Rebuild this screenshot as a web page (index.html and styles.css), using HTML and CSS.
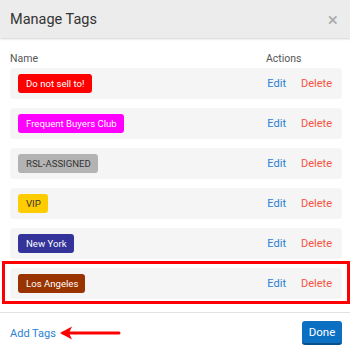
FILE: index.html
```html
<!DOCTYPE html>
<html>
<head>
<meta charset="utf-8">
<link rel="stylesheet" href="styles.css">
</head>
<body>
<div class="modal">
  <div class="header">
    <h1 class="title">Manage Tags</h1>
    <span class="close">&times;</span>
  </div>
  <div class="content">
    <div class="cols">
      <span class="col-name">Name</span>
      <span class="col-actions">Actions</span>
    </div>
    <div class="list">
      <div class="row"><span class="tag t-red">Do not sell to!</span><span class="actions"><a class="edit">Edit</a><a class="del">Delete</a></span></div>
      <div class="row"><span class="tag t-magenta">Frequent Buyers Club</span><span class="actions"><a class="edit">Edit</a><a class="del">Delete</a></span></div>
      <div class="row"><span class="tag t-gray">RSL-ASSIGNED</span><span class="actions"><a class="edit">Edit</a><a class="del">Delete</a></span></div>
      <div class="row"><span class="tag t-yellow">VIP</span><span class="actions"><a class="edit">Edit</a><a class="del">Delete</a></span></div>
      <div class="row"><span class="tag t-navy">New York</span><span class="actions"><a class="edit">Edit</a><a class="del">Delete</a></span></div>
      <div class="highlight">
        <div class="row"><span class="tag t-brown">Los Angeles</span><span class="actions"><a class="edit">Edit</a><a class="del">Delete</a></span></div>
      </div>
    </div>
  </div>
  <div class="footer">
    <div class="add">
      <a class="add-link">Add Tags</a>
      <svg class="arrow" width="62" height="16" viewBox="0 0 62 16">
        <path d="M4 8 H60" stroke="#f00" stroke-width="3" stroke-linecap="round" fill="none"/>
        <path d="M1 8 L13 1.5 L10 8 L13 14.5 Z" fill="#f00"/>
      </svg>
    </div>
    <button class="done">Done</button>
  </div>
</div>
</body>
</html>
```
FILE: styles.css
```css
* { box-sizing: border-box; }
html, body { margin: 0; padding: 0; background: #fff; }
body { font-family: Roboto, "Noto Sans", sans-serif; width: 350px; height: 350px; overflow: hidden; }
.modal { width: 350px; }
.header {
  height: 38px;
  background: #ececec;
  display: flex;
  align-items: center;
  justify-content: space-between;
  padding: 0 12px 0 10px;
  box-shadow: 0 1px 2px rgba(0,0,0,0.18);
  position: relative;
}
.title { margin: 0; font-size: 14.5px; font-weight: 400; color: #333; }
.close { color: #aaa; font-size: 19px; line-height: 1; }
.content { padding: 10px 8px 8px 10px; }
.cols { display: flex; height: 20px; align-items: center; font-size: 10.5px; color: #555; }
.col-name { flex: 1; }
.col-actions { width: 76px; }
.list { display: flex; flex-direction: column; gap: 9px; margin-top: 0; }
.row {
  height: 31px;
  background: #f5f5f5;
  border-radius: 4px;
  display: flex;
  align-items: center;
  padding: 0 10px 0 8px;
}
.tag {
  height: 19px;
  line-height: 19px;
  padding: 0 7px 0 8px;
  border-radius: 3px;
  font-size: 9.6px;
  color: #fff;
}
.t-red { background: #ff0000; }
.t-magenta { background: #ff00ff; }
.t-gray { background: #b3b3b3; color: #333; }
.t-yellow { background: #ffcc00; color: #333; }
.t-navy { background: #333399; }
.t-brown { background: #993300; }
.actions { margin-left: auto; display: flex; gap: 15px; font-size: 11px; }
.edit { color: #2a7fd4; }
.del { color: #f5533d; }
.highlight {
  border: 3px solid #ff0000;
  margin: -7px -8px 0 -8px;
  padding: 4px 5px 2px 5px;
}
.footer {
  border-top: 1px solid #e2e2e2;
  display: flex;
  align-items: center;
  justify-content: space-between;
  padding: 8px 8px 0 10px;
}
.add { display: flex; align-items: center; gap: 3px; }
.add-link { color: #2a7fd4; font-size: 11px; }
.arrow { display: block; }
.done {
  width: 40px;
  height: 24px;
  border: none;
  border-radius: 3px;
  background: #0b6fc2;
  border-bottom: 2px solid #07508c;
  color: #fff;
  font-family: Roboto, sans-serif;
  font-size: 11.5px;
  padding: 0;
}
```
